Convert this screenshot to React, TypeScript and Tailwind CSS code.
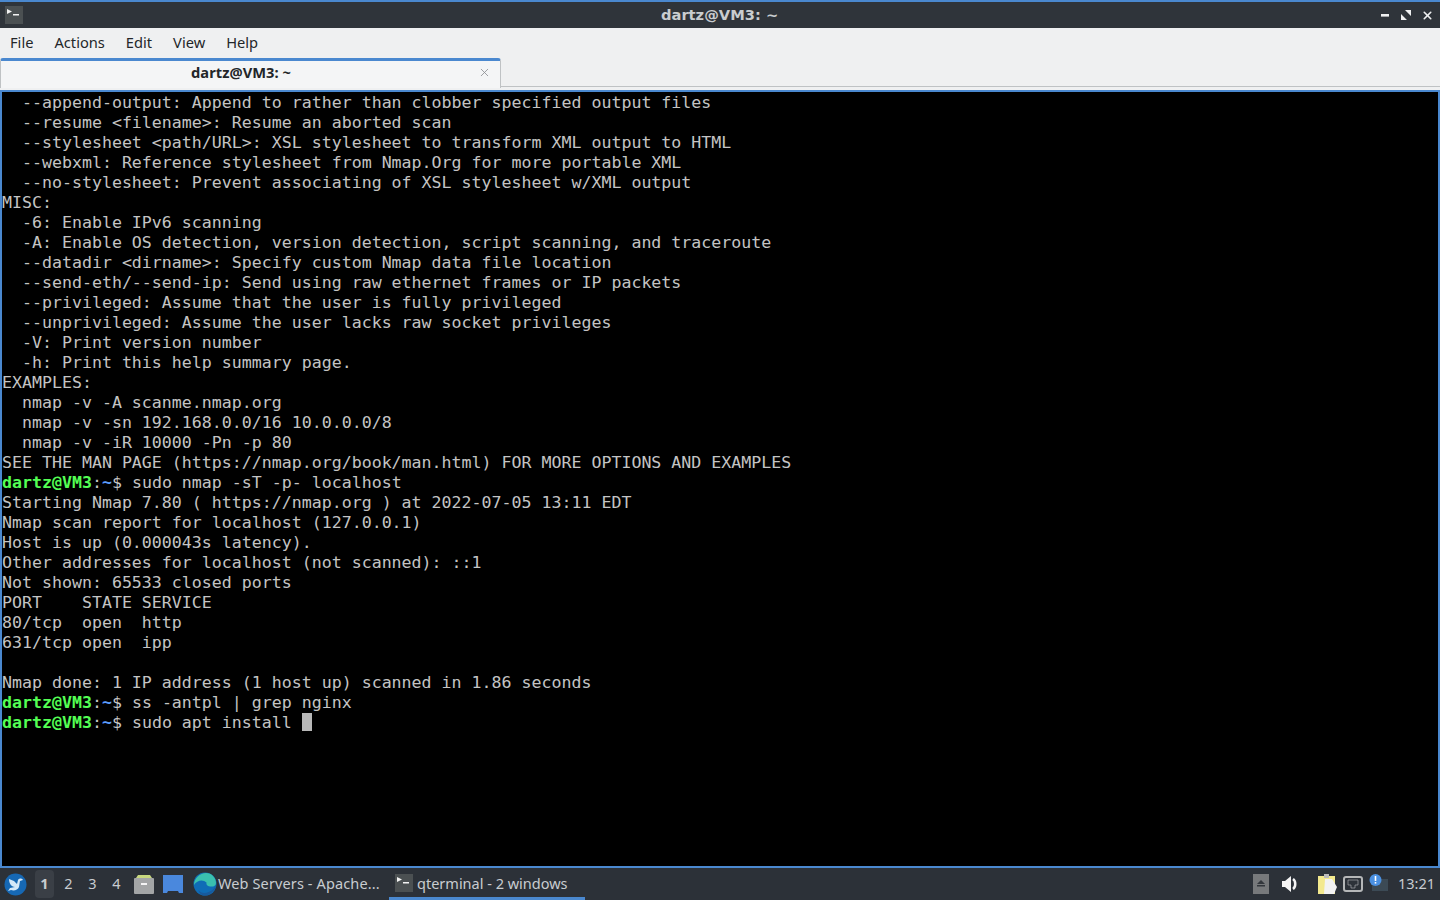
import { X } from "lucide-react";

const lines = [
  "  --append-output: Append to rather than clobber specified output files",
  "  --resume <filename>: Resume an aborted scan",
  "  --stylesheet <path/URL>: XSL stylesheet to transform XML output to HTML",
  "  --webxml: Reference stylesheet from Nmap.Org for more portable XML",
  "  --no-stylesheet: Prevent associating of XSL stylesheet w/XML output",
  "MISC:",
  "  -6: Enable IPv6 scanning",
  "  -A: Enable OS detection, version detection, script scanning, and traceroute",
  "  --datadir <dirname>: Specify custom Nmap data file location",
  "  --send-eth/--send-ip: Send using raw ethernet frames or IP packets",
  "  --privileged: Assume that the user is fully privileged",
  "  --unprivileged: Assume the user lacks raw socket privileges",
  "  -V: Print version number",
  "  -h: Print this help summary page.",
  "EXAMPLES:",
  "  nmap -v -A scanme.nmap.org",
  "  nmap -v -sn 192.168.0.0/16 10.0.0.0/8",
  "  nmap -v -iR 10000 -Pn -p 80",
  "SEE THE MAN PAGE (https://nmap.org/book/man.html) FOR MORE OPTIONS AND EXAMPLES",
  "$sudo nmap -sT -p- localhost",
  "Starting Nmap 7.80 ( https://nmap.org ) at 2022-07-05 13:11 EDT",
  "Nmap scan report for localhost (127.0.0.1)",
  "Host is up (0.000043s latency).",
  "Other addresses for localhost (not scanned): ::1",
  "Not shown: 65533 closed ports",
  "PORT    STATE SERVICE",
  "80/tcp  open  http",
  "631/tcp open  ipp",
  " ",
  "Nmap done: 1 IP address (1 host up) scanned in 1.86 seconds",
  "$ss -antpl | grep nginx",
];

const Prompt = () => (
  <>
    <span className="font-bold text-[#54ff54]">dartz@VM3</span>
    <span>:</span>
    <span className="font-bold text-[#5c9dff]">~</span>
    <span>$ </span>
  </>
);

const TermIcon = () => (
  <svg width="18" height="18" viewBox="0 0 18 18">
    <rect width="18" height="18" fill="#4b5052" />
    <path d="M2 3l5 2.5L2 8z" fill="#f2f2f2" />
    <rect x="8" y="8" width="6" height="1.5" fill="#f2f2f2" />
  </svg>
);

export default function App() {
  return (
    <div className="flex h-[900px] w-[1440px] flex-col overflow-hidden bg-[#eff0f1] font-['Noto_Sans',sans-serif]">
      {/* title bar */}
      <div className="relative flex h-[28px] shrink-0 items-center border-t-2 border-[#4a88cf] bg-[#2f343a] pl-[5px] pr-[6px]">
        <TermIcon />
        <div className="mb-[1px] ml-[638px] w-[117px] whitespace-nowrap font-['DejaVu_Sans',sans-serif] text-[14.67px] font-bold text-[#c9cdd0]">
          dartz@VM3: ~
        </div>
        <div className="ml-auto flex items-center gap-[9px] text-[#eff0f1]">
          <svg width="11" height="11" viewBox="0 0 11 11" fill="currentColor">
            <rect x="1" y="4" width="8" height="2.6" />
          </svg>
          <svg width="12" height="12" viewBox="0 0 12 12" fill="currentColor">
            <path d="M1 11V5l6 6zM11 1v6L5 1z" />
          </svg>
          <X size={13} strokeWidth={3} />
        </div>
      </div>

      {/* menu bar */}
      <div className="flex h-[29px] shrink-0 items-center gap-[21px] pb-[2px] pl-[10px] text-[14.67px] text-[#232629]">
        <span>File</span>
        <span>Actions</span>
        <span>Edit</span>
        <span>View</span>
        <span>Help</span>
      </div>

      {/* tab strip */}
      <div className="flex h-[33px] shrink-0 items-start">
        <div className="mt-[1px] flex h-[30px] w-[501px] items-center rounded-t-[3px] border-x border-[#bfc2c4] border-t-[3px] border-t-[#4a88cf] bg-[#f4f5f6] pb-[5px] text-[14.67px] font-bold text-[#232629]">
          <span className="ml-[190px] tracking-[0.05px]">dartz@VM3: ~</span>
          <X className="ml-auto mr-[9px] text-[#8a8d90]" size={13} strokeWidth={1.5} />
        </div>
        <div className="mt-[29px] h-[1px] flex-1 bg-[#bfc2c4]" />
      </div>

      {/* terminal */}
      <div className="h-[778px] shrink-0 overflow-hidden border-2 border-[#4a88cf] bg-black pt-[1px] text-[#c4c4c4]">
        <pre className="font-['DejaVu_Sans_Mono',monospace] text-[16.6px] leading-[20px]">
          {lines.map((line, i) => (
            <div key={i} className="h-[20px]">
              {line.startsWith("$") ? (
                <>
                  <Prompt />
                  {line.slice(1)}
                </>
              ) : (
                line
              )}
            </div>
          ))}
          <div className="flex h-[20px]">
            <span>
              <Prompt />
              sudo apt install{" "}
            </span>
            <span className="h-[18px] w-[10px] bg-[#b8b8b8]" />
          </div>
        </pre>
      </div>

      {/* taskbar */}
      <div className="flex h-[32px] shrink-0 items-center bg-[#2c3138] text-[14.5px] text-[#c8ccd0]">
        <svg className="ml-[4px]" width="23" height="23" viewBox="0 0 23 23">
          <circle cx="11.5" cy="11.5" r="11" fill="#1668b4" />
          <path
            d="M5 6l5 2 3 3 1-4c1-2 4-2 5 0l-3 1-1 6c-1 3-5 4-8 3l-3 1 2-3 5-1c-4 0-6-4-6-8z"
            fill="#d4e8f8"
          />
        </svg>
        <div className="ml-[8px] flex">
          <span className="flex h-[28px] w-[19px] items-center justify-center rounded-sm bg-[#3a3f46] font-bold">1</span>
          <span className="ml-[5px] flex h-[28px] w-[19px] items-center justify-center">2</span>
          <span className="ml-[5px] flex h-[28px] w-[19px] items-center justify-center">3</span>
          <span className="ml-[5px] flex h-[28px] w-[19px] items-center justify-center">4</span>
        </div>
        <svg className="ml-[7px]" width="22" height="22" viewBox="0 0 22 22">
          <path d="M3 5l2-3h12l2 3z" fill="#c7d77f" />
          <rect x="1" y="5" width="20" height="16" rx="1" fill="#a3a5a6" />
          <rect x="8" y="10" width="6" height="2" fill="#f4f4f4" />
        </svg>
        <svg className="ml-[7px]" width="22" height="22" viewBox="0 0 22 22">
          <path d="M1 2h20v18h-4l-1-2H6l-1 2H1z" fill="#4a88dd" />
        </svg>
        <svg className="ml-[9px]" width="24" height="24" viewBox="0 0 24 24">
          <circle cx="12" cy="12" r="11.5" fill="#0f6cb6" />
          <path d="M1 13C1 6 7 1 13 1c6 0 10 5 10 10 0 3-3 4-6 3.5-3-.5-4-2-3.5-4C10 7 4 8 1 13z" fill="#3ac0ae" />
          <path d="M23 13c-1 6-6 10.500-11 10.500-3 0-6-2-6.500-5.500 2 3 6 4 10 2 3-1 6-3 7.500-7z" fill="#185a9d" />
        </svg>
        <span className="ml-[1px] w-[163px] whitespace-nowrap tracking-[0.12px]">Web Servers - Apache...</span>
        <div className="ml-[8px] flex h-[32px] w-[196px] items-center border-b-[3px] border-[#4a88cf] pl-[6px] pt-[1px]">
          <TermIcon />
          <span className="mb-[-1px] ml-[4px]">qterminal - 2 windows</span>
        </div>
        <div className="ml-auto flex items-center pr-[5px]">
          <svg width="16" height="20" viewBox="0 0 16 20">
            <rect width="16" height="20" fill="#77797b" />
            <path d="M8 6l4 4H4zM4 11h8v1.5H4z" fill="#33373c" />
          </svg>
          <svg className="ml-[12px]" width="18" height="18" viewBox="0 0 18 18">
            <path d="M1 6h3l6-5v16l-6-5H1z" fill="#f4f4f4" />
            <path d="M12 4c3 2 3 8 0 10" fill="none" stroke="#f4f4f4" strokeWidth="2.5" />
          </svg>
          <svg className="ml-[18px]" width="22" height="22" viewBox="0 0 22 22">
            <rect x="1" y="3" width="17" height="18" fill="#f3e98e" />
            <rect x="7" y="1" width="5" height="4" fill="#bbb" />
            <path d="M8 6l7 0 5 8-3 7H7z" fill="#f2f2f2" />
          </svg>
          <svg className="ml-[4px]" width="20" height="18" viewBox="0 0 20 18">
            <rect x="1" y="2" width="18" height="14" rx="2" fill="none" stroke="#b5b7b8" strokeWidth="2" />
            <path d="M5 5h10v5h-3v3H8v-3H5z" fill="#2c3138" stroke="#b5b7b8" strokeWidth="0.6" />
          </svg>
          <svg className="ml-[6px]" width="20" height="22" viewBox="0 0 20 22">
            <rect x="3" y="6" width="16" height="12" fill="#3c4a55" />
            <circle cx="6.5" cy="7" r="6" fill="#4a90e2" />
            <rect x="5.7" y="3" width="1.6" height="5" fill="#fff" />
            <rect x="5.7" y="9" width="1.6" height="1.6" fill="#fff" />
          </svg>
          <span className="ml-[9px]">13:21</span>
        </div>
      </div>
    </div>
  );
}
